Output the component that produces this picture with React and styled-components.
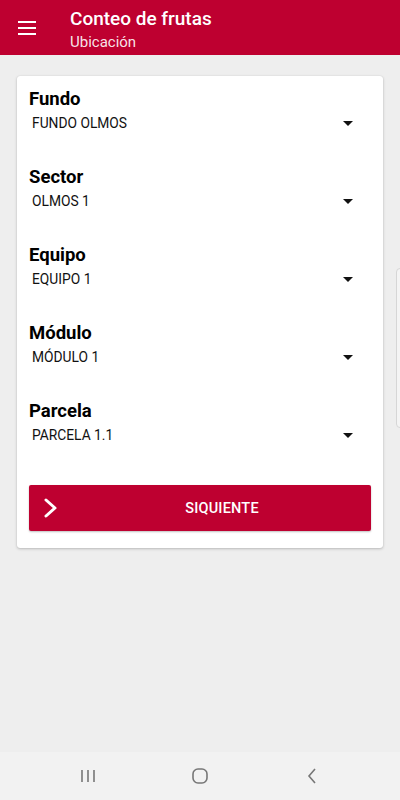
import React from "react";
import styled, { createGlobalStyle } from "styled-components";

const Global = createGlobalStyle`
  html, body { margin: 0; padding: 0; }
  body { font-family: Roboto, "Noto Sans", "Liberation Sans", sans-serif; background: #eeeeee; }
  * { box-sizing: border-box; }
`;

const Screen = styled.div`
  position: relative;
  width: 400px;
  height: 800px;
  display: flex;
  flex-direction: column;
  background: #eeeeee;
  overflow: hidden;
`;

const AppBar = styled.header`
  height: 55px;
  background: #be0030;
  display: flex;
  align-items: center;
  padding-left: 18px;
  color: #fff;
  flex-shrink: 0;
`;

const MenuButton = styled.div`
  width: 18px;
  display: flex;
  flex-direction: column;
  gap: 4px;
  margin-right: 34px;
  span { display: block; height: 2px; background: #fff; }
`;

const Titles = styled.div`
  display: flex;
  flex-direction: column;
  margin-top: 4px;
`;

const Title = styled.div`
  font-size: 19px;
  font-weight: 500;
  line-height: 22px;
`;

const Subtitle = styled.div`
  font-size: 15px;
  line-height: 20px;
  margin-top: 2px;
  color: rgba(255,255,255,0.9);
`;

const Main = styled.main`
  flex: 1;
  padding: 21px 17px 0;
`;

const Card = styled.section`
  background: #fff;
  border-radius: 3px;
  box-shadow: 0 1px 3px rgba(0,0,0,0.22), 0 0 1px rgba(0,0,0,0.15);
  padding: 12px 12px 17px;
  display: flex;
  flex-direction: column;
`;

const Field = styled.div`
  display: flex;
  flex-direction: column;
  margin-bottom: ${p => (p.$last ? "40px" : "33px")};
`;

const Label = styled.div`
  font-size: 18.5px;
  font-weight: 700;
  line-height: 22px;
  color: #000;
`;

const SelectRow = styled.div`
  margin-top: 3px;
  height: 20px;
  display: flex;
  align-items: center;
  justify-content: space-between;
  padding-left: 3px;
  padding-right: 18px;
  font-size: 13.8px;
  color: #111;
`;

const Caret = styled.span`
  width: 0;
  height: 0;
  border-left: 5px solid transparent;
  border-right: 5px solid transparent;
  border-top: 5px solid #111;
`;

const Button = styled.button`
  height: 46px;
  border: none;
  border-radius: 2px;
  background: #be0030;
  color: #fff;
  display: flex;
  align-items: center;
  padding: 0 0 0 12px;
  font-family: inherit;
  font-size: 14.5px;
  font-weight: 500;
  box-shadow: 0 1px 2px rgba(0,0,0,0.25);
`;

const ButtonText = styled.span`
  flex: 1;
  text-align: center;
  padding-left: 12px;
  letter-spacing: 0.2px;
`;

const NavBar = styled.nav`
  height: 48px;
  background: #f2f2f2;
  display: grid;
  grid-template-columns: repeat(3, 1fr);
  align-items: center;
  justify-items: center;
  padding: 0 32px;
  flex-shrink: 0;
`;

const EdgeHandle = styled.div`
  position: absolute;
  right: -4px;
  top: 268px;
  width: 8px;
  height: 160px;
  border: 1px solid #d6d6d6;
  border-radius: 4px;
  background: #f4f4f4;
`;

const fields = [
  ["Fundo", "FUNDO OLMOS"],
  ["Sector", "OLMOS 1"],
  ["Equipo", "EQUIPO 1"],
  ["Módulo", "MÓDULO 1"],
  ["Parcela", "PARCELA 1.1"],
];

export default function App() {
  return (
    <Screen>
      <Global />
      <AppBar>
        <MenuButton><span /><span /><span /></MenuButton>
        <Titles>
          <Title>Conteo de frutas</Title>
          <Subtitle>Ubicación</Subtitle>
        </Titles>
      </AppBar>
      <Main>
        <Card>
          {fields.map(([l, v], i) => (
            <Field key={l} $last={i === fields.length - 1}>
              <Label>{l}</Label>
              <SelectRow>
                <span>{v}</span>
                <Caret />
              </SelectRow>
            </Field>
          ))}
          <Button>
            <svg width="20" height="22" viewBox="0 0 20 22">
              <path d="M5 3 L14 11 L5 19" fill="none" stroke="#fff" strokeWidth="3" strokeLinecap="round" strokeLinejoin="round" />
            </svg>
            <ButtonText>SIQUIENTE</ButtonText>
          </Button>
        </Card>
      </Main>
      <EdgeHandle />
      <NavBar>
        <svg width="16" height="14" viewBox="0 0 16 14">
          <g stroke="#777" strokeWidth="1.6"><path d="M2 1v12M8 1v12M14 1v12" /></g>
        </svg>
        <svg width="16" height="16" viewBox="0 0 16 16">
          <rect x="1" y="1" width="14" height="14" rx="5" fill="none" stroke="#777" strokeWidth="1.6" />
        </svg>
        <svg width="10" height="16" viewBox="0 0 10 16">
          <path d="M8 1 L2 8 L8 15" fill="none" stroke="#777" strokeWidth="1.6" />
        </svg>
      </NavBar>
    </Screen>
  );
}
